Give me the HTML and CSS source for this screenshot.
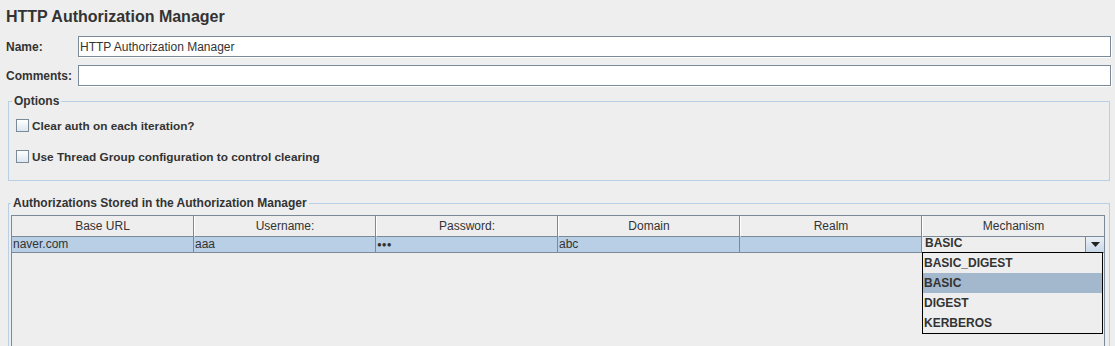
FILE: index.html
```html
<!doctype html>
<html lang="en">
<head>
    <meta charset="UTF-8">
    <title>HTTP Authorization Manager</title>
    <link rel="stylesheet" href="styles.css">
</head>
<body>
<div class="title">HTTP Authorization Manager</div>

<div class="field-row">
    <label class="field-label">Name:</label>
    <input class="field-input" value="HTTP Authorization Manager">
</div>
<div class="field-row">
    <label class="field-label">Comments:</label>
    <input class="field-input" value="">
</div>

<fieldset class="group options">
    <legend class="group-title">Options</legend>
    <div class="check-row"><span class="checkbox"></span>Clear auth on each iteration?</div>
    <div class="check-row"><span class="checkbox"></span>Use Thread Group configuration to control clearing</div>
</fieldset>

<fieldset class="group auths">
    <legend class="group-title">Authorizations Stored in the Authorization Manager</legend>
    <div class="table">
        <div class="head">Base URL</div>
        <div class="head">Username:</div>
        <div class="head">Password:</div>
        <div class="head">Domain</div>
        <div class="head">Realm</div>
        <div class="head">Mechanism</div>

        <div class="cell">naver.com</div>
        <div class="cell">aaa</div>
        <div class="cell dots">&#9679;&#9679;&#9679;</div>
        <div class="cell">abc</div>
        <div class="cell"></div>
        <div class="cell combo-cell">
            <div class="combo">
                <span class="combo-value">BASIC</span>
                <span class="combo-arrow">
                    <svg width="9" height="5" viewBox="0 0 9 5"><path d="M0 0h9L4.5 5z" fill="#222"/></svg>
                </span>
            </div>
            <ul class="popup">
                <li>BASIC_DIGEST</li>
                <li class="selected">BASIC</li>
                <li>DIGEST</li>
                <li>KERBEROS</li>
            </ul>
        </div>
        <div class="empty"></div>
    </div>
</fieldset>
</body>
</html>
```

FILE: styles.css
```css
body {
    margin: 0;
    background-color: #eeeeee;
    color: #333333;
    font-family: "Liberation Sans", Arial, sans-serif;
    font-size: 12px;
    overflow: hidden;
}
.title {
    font-size: 16px;
    font-weight: bold;
    line-height: 20px;
    padding: 7px 6px 0;
}
.field-row {
    display: flex;
    align-items: center;
    margin: 9px 4px 0 6px;
}
.field-row + .field-row {
    margin-top: 8px;
}
.field-label {
    width: 72px;
    font-weight: bold;
}
.field-input {
    flex: 1;
    height: 21px;
    box-sizing: border-box;
    margin: 0;
    padding: 0 1px;
    border: 1px solid #7a8a99;
    box-shadow: 1px 1px 0 0 #ffffff;
    background-color: #ffffff;
    color: #333333;
    font-family: inherit;
    font-size: 12px;
    outline: none;
}
.group {
    margin: 8px 5px 0 8px;
    padding: 0 3px;
    border: 1px solid #b8cfe5;
    min-width: 0;
}
.group-title {
    padding: 0 2px;
    font-weight: bold;
    line-height: 14px;
}
.options {
    padding-top: 2px;
    padding-bottom: 8px;
}
.check-row {
    display: flex;
    align-items: center;
    height: 31px;
    padding-left: 4px;
    font-weight: bold;
    font-size: 11.8px;
}
.checkbox {
    width: 11px;
    height: 11px;
    margin-right: 3px;
    border: 1px solid #7a8a99;
    background: linear-gradient(#ffffff, #dde6ef);
}
.auths {
    margin-top: 15px;
    padding: 5px 3px 40px 2px;
}
.table {
    position: relative;
    display: grid;
    grid-template-columns: repeat(6, 1fr);
    grid-template-rows: 21px 16px 100px;
    border: 1px solid #7a8a99;
    margin-right: 1px;
}
.head {
    text-align: center;
    line-height: 21px;
    border-left: 1px solid #ffffff;
    border-right: 1px solid #7a8a99;
    border-bottom: 1px solid #7a8a99;
}
.head:first-child {
    border-left: none;
}
.head:nth-child(6) {
    border-right: none;
}
.cell {
    background-color: #b8cfe5;
    line-height: 15px;
    padding-left: 1px;
    border-right: 1px solid #7a8a99;
    border-bottom: 1px solid #7a8a99;
    white-space: nowrap;
}
.cell:nth-child(12) {
    border-right: none;
}
.dots {
    font-size: 8px;
}
.empty {
    grid-column: 1 / -1;
}
.combo-cell {
    position: relative;
    padding: 0;
}
.combo {
    display: flex;
    height: 15px;
    background-color: #eeeeee;
    border-left: 1px solid #7a8a99;
    margin-left: -1px;
}
.combo-value {
    flex: 1;
    font-weight: bold;
    line-height: 12px;
    padding-left: 3px;
    overflow: hidden;
}
.combo-arrow {
    display: flex;
    align-items: center;
    justify-content: center;
    width: 18px;
    border-left: 1px solid #7a8a99;
    background: linear-gradient(#eaf0f6, #c8d8e8);
}
.popup {
    position: absolute;
    left: 0;
    right: 1px;
    top: 15px;
    margin: 0;
    padding: 0;
    list-style: none;
    background-color: #eeeeee;
    border: 1px solid #000000;
}
.popup li {
    height: 20px;
    line-height: 20px;
    padding-left: 1px;
    font-weight: bold;
}
.popup .selected {
    background-color: #a3b8cc;
}
```
